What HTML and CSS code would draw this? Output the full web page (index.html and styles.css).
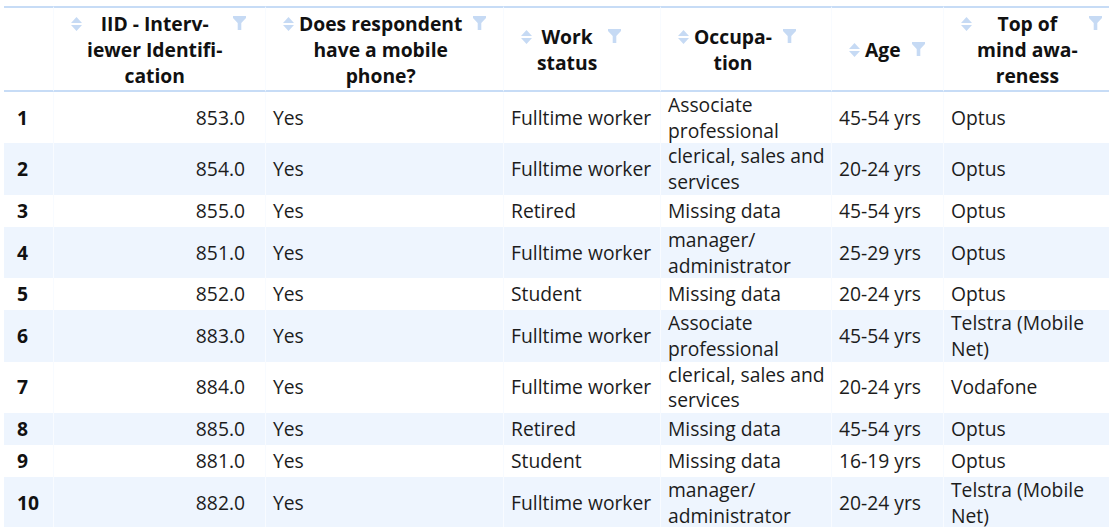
FILE: index.html
```html
<!DOCTYPE html>
<html lang="en">
<head>
<meta charset="utf-8">
<title>Survey table</title>
<link rel="stylesheet" href="styles.css">
</head>
<body>
<table class="grid">
  <colgroup>
    <col class="c-idx"><col class="c-iid"><col class="c-mob"><col class="c-work"><col class="c-occ"><col class="c-age"><col class="c-top">
  </colgroup>
  <thead>
    <tr>
      <th class="h-idx"></th>
      <th><div class="hd"><svg class="sort" viewBox="0 0 11 14"><path d="M5.5 0 L11 6 L0 6 Z M0 8 L11 8 L5.5 14 Z"/></svg><span class="lbl">IID - Interv-<br>iewer Identifi-<br>cation</span><svg class="filt" viewBox="0 0 13 14"><path d="M0 0 H13 V2 L8.3 7 V14 H4.7 V7 L0 2 Z"/></svg></div></th>
      <th><div class="hd"><svg class="sort" viewBox="0 0 11 14"><path d="M5.5 0 L11 6 L0 6 Z M0 8 L11 8 L5.5 14 Z"/></svg><span class="lbl">Does respondent<br>have a mobile<br>phone?</span><svg class="filt" viewBox="0 0 13 14"><path d="M0 0 H13 V2 L8.3 7 V14 H4.7 V7 L0 2 Z"/></svg></div></th>
      <th><div class="hd"><svg class="sort" viewBox="0 0 11 14"><path d="M5.5 0 L11 6 L0 6 Z M0 8 L11 8 L5.5 14 Z"/></svg><span class="lbl">Work<br>status</span><svg class="filt" viewBox="0 0 13 14"><path d="M0 0 H13 V2 L8.3 7 V14 H4.7 V7 L0 2 Z"/></svg></div></th>
      <th><div class="hd"><svg class="sort" viewBox="0 0 11 14"><path d="M5.5 0 L11 6 L0 6 Z M0 8 L11 8 L5.5 14 Z"/></svg><span class="lbl">Occupa-<br>tion</span><svg class="filt" viewBox="0 0 13 14"><path d="M0 0 H13 V2 L8.3 7 V14 H4.7 V7 L0 2 Z"/></svg></div></th>
      <th><div class="hd"><svg class="sort" viewBox="0 0 11 14"><path d="M5.5 0 L11 6 L0 6 Z M0 8 L11 8 L5.5 14 Z"/></svg><span class="lbl">Age</span><svg class="filt" viewBox="0 0 13 14"><path d="M0 0 H13 V2 L8.3 7 V14 H4.7 V7 L0 2 Z"/></svg></div></th>
      <th><div class="hd"><svg class="sort" viewBox="0 0 11 14"><path d="M5.5 0 L11 6 L0 6 Z M0 8 L11 8 L5.5 14 Z"/></svg><span class="lbl">Top of<br>mind awa-<br>reness</span><svg class="filt" viewBox="0 0 13 14"><path d="M0 0 H13 V2 L8.3 7 V14 H4.7 V7 L0 2 Z"/></svg></div></th>
    </tr>
  </thead>
  <tbody>
    <tr><td class="idx">1</td><td class="num">853.0</td><td>Yes</td><td>Fulltime worker</td><td>Associate professional</td><td>45-54 yrs</td><td>Optus</td></tr>
    <tr><td class="idx">2</td><td class="num">854.0</td><td>Yes</td><td>Fulltime worker</td><td>clerical, sales and services</td><td>20-24 yrs</td><td>Optus</td></tr>
    <tr><td class="idx">3</td><td class="num">855.0</td><td>Yes</td><td>Retired</td><td>Missing data</td><td>45-54 yrs</td><td>Optus</td></tr>
    <tr><td class="idx">4</td><td class="num">851.0</td><td>Yes</td><td>Fulltime worker</td><td>manager/<wbr>administrator</td><td>25-29 yrs</td><td>Optus</td></tr>
    <tr><td class="idx">5</td><td class="num">852.0</td><td>Yes</td><td>Student</td><td>Missing data</td><td>20-24 yrs</td><td>Optus</td></tr>
    <tr><td class="idx">6</td><td class="num">883.0</td><td>Yes</td><td>Fulltime worker</td><td>Associate professional</td><td>45-54 yrs</td><td>Telstra (Mobile Net)</td></tr>
    <tr><td class="idx">7</td><td class="num">884.0</td><td>Yes</td><td>Fulltime worker</td><td>clerical, sales and services</td><td>20-24 yrs</td><td>Vodafone</td></tr>
    <tr><td class="idx">8</td><td class="num">885.0</td><td>Yes</td><td>Retired</td><td>Missing data</td><td>45-54 yrs</td><td>Optus</td></tr>
    <tr><td class="idx">9</td><td class="num">881.0</td><td>Yes</td><td>Student</td><td>Missing data</td><td>16-19 yrs</td><td>Optus</td></tr>
    <tr><td class="idx">10</td><td class="num">882.0</td><td>Yes</td><td>Fulltime worker</td><td>manager/<wbr>administrator</td><td>20-24 yrs</td><td>Telstra (Mobile Net)</td></tr>
  </tbody>
</table>
</body>
</html>
```
FILE: styles.css
```css
html, body {
  margin: 0;
  padding: 0;
  background: #ffffff;
}
body {
  font-family: "Open Sans", "Noto Sans", sans-serif;
  font-size: 19.3px;
  color: #1c1c1c;
  overflow: hidden;
}
.grid {
  margin: 6px 0 0 4px;
  border-collapse: separate;
  border-spacing: 0;
  table-layout: fixed;
  width: 1105px;
}
.c-idx { width: 49px; }
.c-iid { width: 212px; }
.c-mob { width: 238px; }
.c-work { width: 157px; }
.c-occ { width: 171px; }
.c-age { width: 112px; }
.c-top { width: 166px; }

.grid th {
  border-top: 2px solid #c7dcf6;
  border-bottom: 2px solid #c7dcf6;
  padding: 3px 2px 1px 17px;
  line-height: 26px;
  font-weight: 700;
  color: #111111;
  vertical-align: middle;
  text-align: left;
}
.grid th.h-idx { padding: 0; }
.grid th + th, .grid td + td {
  border-left: 1px solid #f8fbff;
}
.hd {
  display: flex;
  align-items: flex-start;
}
.sort {
  width: 11px;
  height: 14px;
  margin-top: 6px;
  margin-right: 5px;
  flex: none;
  fill: #c6daf4;
}
.filt {
  width: 13px;
  height: 14px;
  margin-top: 5px;
  margin-left: 11px;
  flex: none;
  fill: #c6daf4;
}
.lbl {
  text-align: center;
  white-space: nowrap;
}
.grid td {
  height: 32px;
  padding: 0 3px 0 7px;
  line-height: 25.7px;
  vertical-align: middle;
}
.grid tbody tr:nth-child(even) td {
  background: #eef5fe;
}
.grid td.idx {
  font-weight: 700;
  color: #111111;
  padding-left: 13px;
}
.grid td.num {
  text-align: right;
  padding-right: 20px;
}
```
